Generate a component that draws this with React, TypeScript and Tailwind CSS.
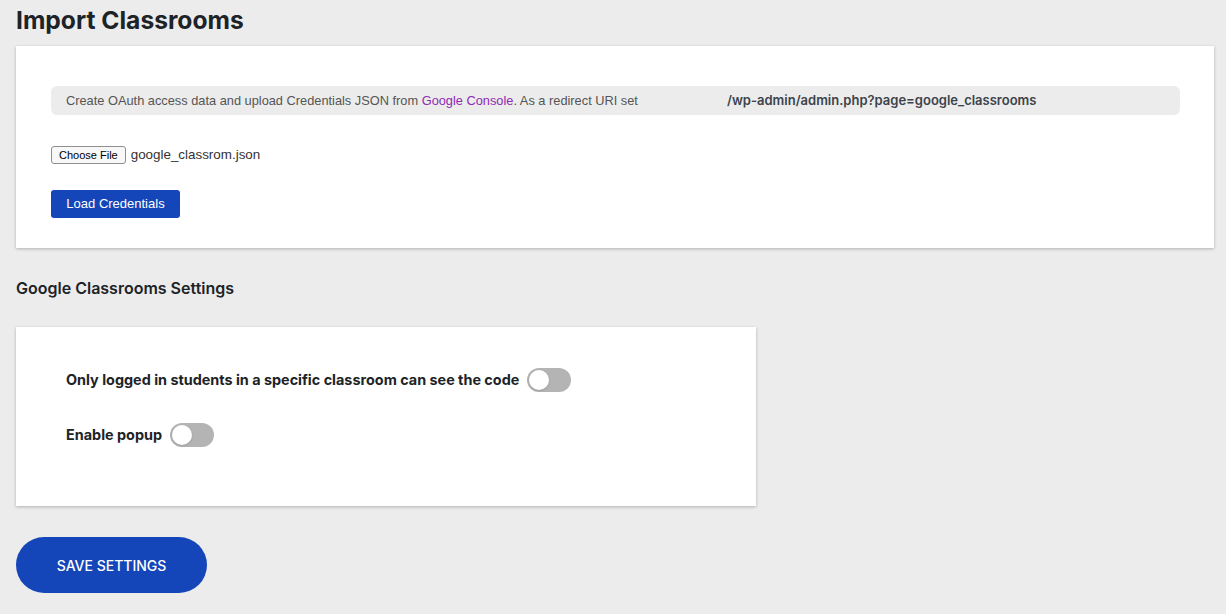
import { useState } from "react";

const Toggle = ({ on, onChange }: { on: boolean; onChange: () => void }) => {
  return (
    <button
      type="button"
      onClick={onChange}
      className={`relative inline-flex h-6 w-11 shrink-0 items-center rounded-full ${
        on ? "bg-[#1546b9]" : "bg-[#b4b4b4]"
      }`}
    >
      <span
        className={`block h-5 w-5 rounded-full bg-white shadow ${
          on ? "translate-x-[22px]" : "translate-x-[2px]"
        }`}
      />
    </button>
  );
};

const App = () => {
  const [restrict, setRestrict] = useState(false);
  const [popup, setPopup] = useState(false);

  return (
    <div className="min-h-[614px] bg-[#ececec] pl-4 pr-3 pb-5 font-['Inter',sans-serif] text-[#1d2327]">
      <h1 className="pt-[5px] text-[24.6px] font-bold leading-[30px]">
        Import Classrooms
      </h1>

      <div className="mt-[11px] bg-white pl-[35px] pr-[34px] pt-10 pb-[30px] shadow-[0_1px_3px_rgba(0,0,0,0.25)]">
        <div className="flex h-[29px] items-center rounded-md bg-[#ececec] pl-[15px] font-['Liberation_Sans',sans-serif] text-[12.8px] text-[#555]">
          <span className="w-[661px] shrink-0">
            Create OAuth access data and upload Credentials JSON from{" "}
            <a href="#" className="text-[#8e2bb5]">
              Google Console
            </a>
            . As a redirect URI set
          </span>
          <span className="font-['Inter',sans-serif] text-[13px] font-semibold text-[#3c434a]">
            /wp-admin/admin.php?page=google_classrooms
          </span>
        </div>

        <div className="mt-[30px] flex items-center gap-[5px]">
          <button
            type="button"
            className="h-[18px] rounded-[3px] border border-[#8f8f8f] bg-[#f8f8f8] px-[7px] font-['Liberation_Sans',sans-serif] text-[11px] leading-[16px] text-black"
          >
            Choose File
          </button>
          <span className="font-['Liberation_Sans',sans-serif] text-[13.4px] text-[#333]">
            google_classrom.json
          </span>
        </div>

        <button
          type="button"
          className="mt-[25px] block h-[28px] w-[129px] rounded-[3px] bg-[#1546b9] font-['Liberation_Sans',sans-serif] text-[13px] text-white"
        >
          Load Credentials
        </button>
      </div>

      <h2 className="mt-[30px] text-[16px] font-semibold leading-5">
        Google Classrooms Settings
      </h2>

      <div className="mt-[29px] w-[740px] bg-white px-[50px] pt-[41px] pb-[59px] shadow-[0_1px_3px_rgba(0,0,0,0.25)]">
        <div className="flex items-center gap-2">
          <span className="text-[14.4px] font-bold">
            Only logged in students in a specific classroom can see the code
          </span>
          <Toggle on={restrict} onChange={() => setRestrict(!restrict)} />
        </div>
        <div className="mt-[31px] flex items-center gap-2">
          <span className="text-[14.4px] font-bold">Enable popup</span>
          <Toggle on={popup} onChange={() => setPopup(!popup)} />
        </div>
      </div>

      <button
        type="button"
        className="mt-[31px] h-[56px] w-[191px] rounded-full bg-[#1546b9] text-[14px] font-medium uppercase text-white"
      >
        Save Settings
      </button>
    </div>
  );
};

export default App;
